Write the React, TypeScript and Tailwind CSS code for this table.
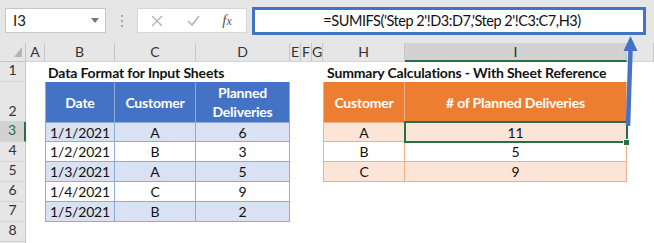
import React from "react";

const F = "font-['Lato','Open_Sans',sans-serif]";

function TopBar() {
  return (
    <div className="relative h-[43px] bg-[#e6e6e6] flex items-start pt-[8px] pl-[5px]">
      <div className="w-[101px] h-[25px] bg-white border border-[#c6c6c6] flex items-center justify-between pl-[7px] pr-[6px]">
        <span className="text-[15px] text-[#222] leading-none">I3</span>
        <span className="w-0 h-0 border-l-[4px] border-r-[4px] border-t-[5px] border-l-transparent border-r-transparent border-t-[#777]" />
      </div>
      <div className="w-[31px] h-[25px] flex flex-col items-center justify-center gap-[3px]">
        <span className="w-[2px] h-[2px] bg-[#a6a6a6]" />
        <span className="w-[2px] h-[2px] bg-[#a6a6a6]" />
        <span className="w-[2px] h-[2px] bg-[#a6a6a6]" />
      </div>
      <div className="w-[110px] h-[25px] bg-white border border-[#d6d6d6] flex items-center">
        <div className="w-[38px] flex justify-center">
          <svg width="12" height="12" viewBox="0 0 12 12">
            <path d="M1 1 L11 11 M11 1 L1 11" stroke="#b3b3b3" strokeWidth="1.4" fill="none" />
          </svg>
        </div>
        <div className="w-[34px] flex justify-center">
          <svg width="13" height="11" viewBox="0 0 13 11">
            <path d="M1 6 L5 10 L12 1" stroke="#b3b3b3" strokeWidth="1.6" fill="none" />
          </svg>
        </div>
        <div className="w-[34px] flex justify-center">
          <span className="font-['Liberation_Serif',serif] italic text-[15px] text-[#555] leading-none">
            f<span className="text-[12px]">x</span>
          </span>
        </div>
      </div>
      <div className="ml-[5px] mt-[-1px] w-[394px] h-[28px] bg-white border-[3px] border-[#4472c4] flex items-center justify-center pl-[6px]">
        <span className="text-[14.5px] text-[#111] leading-none tracking-[-0.45px]">
          =SUMIFS('Step 2'!D3:D7,'Step 2'!C3:C7,H3)
        </span>
      </div>
    </div>
  );
}

const colHeads = ["A", "B", "C", "D", "E", "F", "G", "H", "I", ""];

export default function App() {
  const leftRows = [
    ["1/1/2021", "A", "6"],
    ["1/2/2021", "B", "3"],
    ["1/3/2021", "A", "5"],
    ["1/4/2021", "C", "9"],
    ["1/5/2021", "B", "2"],
  ];
  const rightRows = [
    ["A", "11"],
    ["B", "5"],
    ["C", "9"],
  ];
  return (
    <div className={`relative w-[654px] h-[243px] bg-white overflow-hidden text-[#111] ${F}`}>
      <TopBar />
      <div className="grid h-[200px] grid-cols-[26px_19px_70px_81px_94px_11px_11px_11px_82px_222px_1fr] grid-rows-[19px_20px_40px_20px_20px_20px_20px_20px_20px_1fr]">
        {/* corner */}
        <div className="col-start-1 row-start-1 bg-[#e6e6e6] border-r border-b border-[#c6c6c6] relative">
          <svg className="absolute left-[14px] top-[4px]" width="9" height="11" viewBox="0 0 9 11">
            <polygon points="0,10 8,10 8,0" fill="#b4b4b4" />
          </svg>
        </div>
        {colHeads.map((h, i) => (
          <div
            key={i}
            className={`row-start-1 flex items-center justify-center text-[14px] leading-none border-r border-[#c6c6c6] ${
              h === "I"
                ? "bg-[#d2d2d2] border-b-2 border-b-[#217346] text-[#262626]"
                : "bg-[#e6e6e6] border-b border-b-[#d4d4d4] text-[#333]"
            }`}
          >
            {h}
          </div>
        ))}
        {/* row headers */}
        {[1, 2, 3, 4, 5, 6, 7, 8].map((n) => (
          <div
            key={n}
            className={`col-start-1 flex justify-center text-[14px] leading-none pb-[3px] ${
              n === 2 ? "items-end" : "items-center"
            } ${
              n === 3
                ? "bg-[#d2d2d2] text-[#217346] border-r-2 border-r-[#217346] border-b border-b-[#d4d4d4]"
                : "bg-[#e6e6e6] text-[#333] border-r border-r-[#c6c6c6] border-b border-b-[#d4d4d4]"
            }`}
          >
            {n}
          </div>
        ))}
        <div className="col-start-1 bg-[#e6e6e6] border-r border-[#c6c6c6]" />

        {/* titles */}
        <div className="col-start-3 col-span-3 row-start-2 flex items-center pl-[3px] font-bold text-[14px] tracking-[-0.15px] whitespace-nowrap">
          Data Format for Input Sheets
        </div>
        <div className="col-start-9 col-span-2 row-start-2 flex items-center pl-[4px] font-bold text-[14px] tracking-[-0.15px] whitespace-nowrap">
          Summary Calculations - With Sheet Reference
        </div>

        {/* left table */}
        <div className="col-start-3 col-span-3 row-start-3 row-span-6 grid grid-cols-[70px_81px_94px] grid-rows-[40px_20px_20px_20px_20px_20px] text-[14px] tracking-[-0.2px]">
          {["Date", "Customer", "Planned Deliveries"].map((h, i) => (
            <div
              key={h}
              className={`bg-[#4472c4] text-white font-bold flex items-center justify-center text-center leading-[19px] border-r border-[#8eaadb] ${
                i === 0 ? "border-l" : ""
              } ${i === 2 ? "px-[10px]" : ""}`}
            >
              {h}
            </div>
          ))}
          {leftRows.map((r, ri) =>
            r.map((c, ci) => (
              <div
                key={`${ri}-${ci}`}
                className={`flex items-center justify-center border-r border-b border-[#8eaadb] ${
                  ci === 0 ? "border-l" : ""
                } ${ri === 0 ? "border-t" : ""} ${ri % 2 === 0 ? "bg-[#d9e1f2]" : "bg-white"}`}
              >
                {c}
              </div>
            ))
          )}
        </div>

        {/* right table */}
        <div className="col-start-9 col-span-2 row-start-3 row-span-4 grid grid-cols-[82px_222px] grid-rows-[40px_20px_20px_20px] text-[14px] tracking-[-0.2px]">
          {["Customer", "# of Planned Deliveries"].map((h, i) => (
            <div
              key={h}
              className={`bg-[#ed7d31] text-white font-bold flex items-center justify-center border-r border-[#f4b084] ${
                i === 0 ? "border-l" : ""
              }`}
            >
              {h}
            </div>
          ))}
          {rightRows.map((r, ri) =>
            r.map((c, ci) => (
              <div
                key={`${ri}-${ci}`}
                className={`flex items-center justify-center border-r border-b border-[#f4b084] ${
                  ci === 0 ? "border-l" : ""
                } ${ri === 0 ? "border-t" : ""} ${ri % 2 === 0 ? "bg-[#fce4d6]" : "bg-white"}`}
              >
                {c}
              </div>
            ))
          )}
        </div>
      </div>

      {/* selection on I3 */}
      <div className="absolute left-[404px] top-[121px] w-[224px] h-[22px] border-2 border-[#217346] pointer-events-none" />
      <div className="absolute left-[623px] top-[139px] w-[7px] h-[7px] bg-[#217346] border border-white" />

      {/* annotation arrow */}
      <svg className="absolute left-[618px] top-[35px]" width="24" height="94" viewBox="0 0 24 94">
        <line x1="12.5" y1="14" x2="10" y2="91" stroke="#4472c4" strokeWidth="4.5" />
        <polygon points="12.5,1 19.5,16 5.5,16" fill="#4472c4" />
      </svg>
    </div>
  );
}
